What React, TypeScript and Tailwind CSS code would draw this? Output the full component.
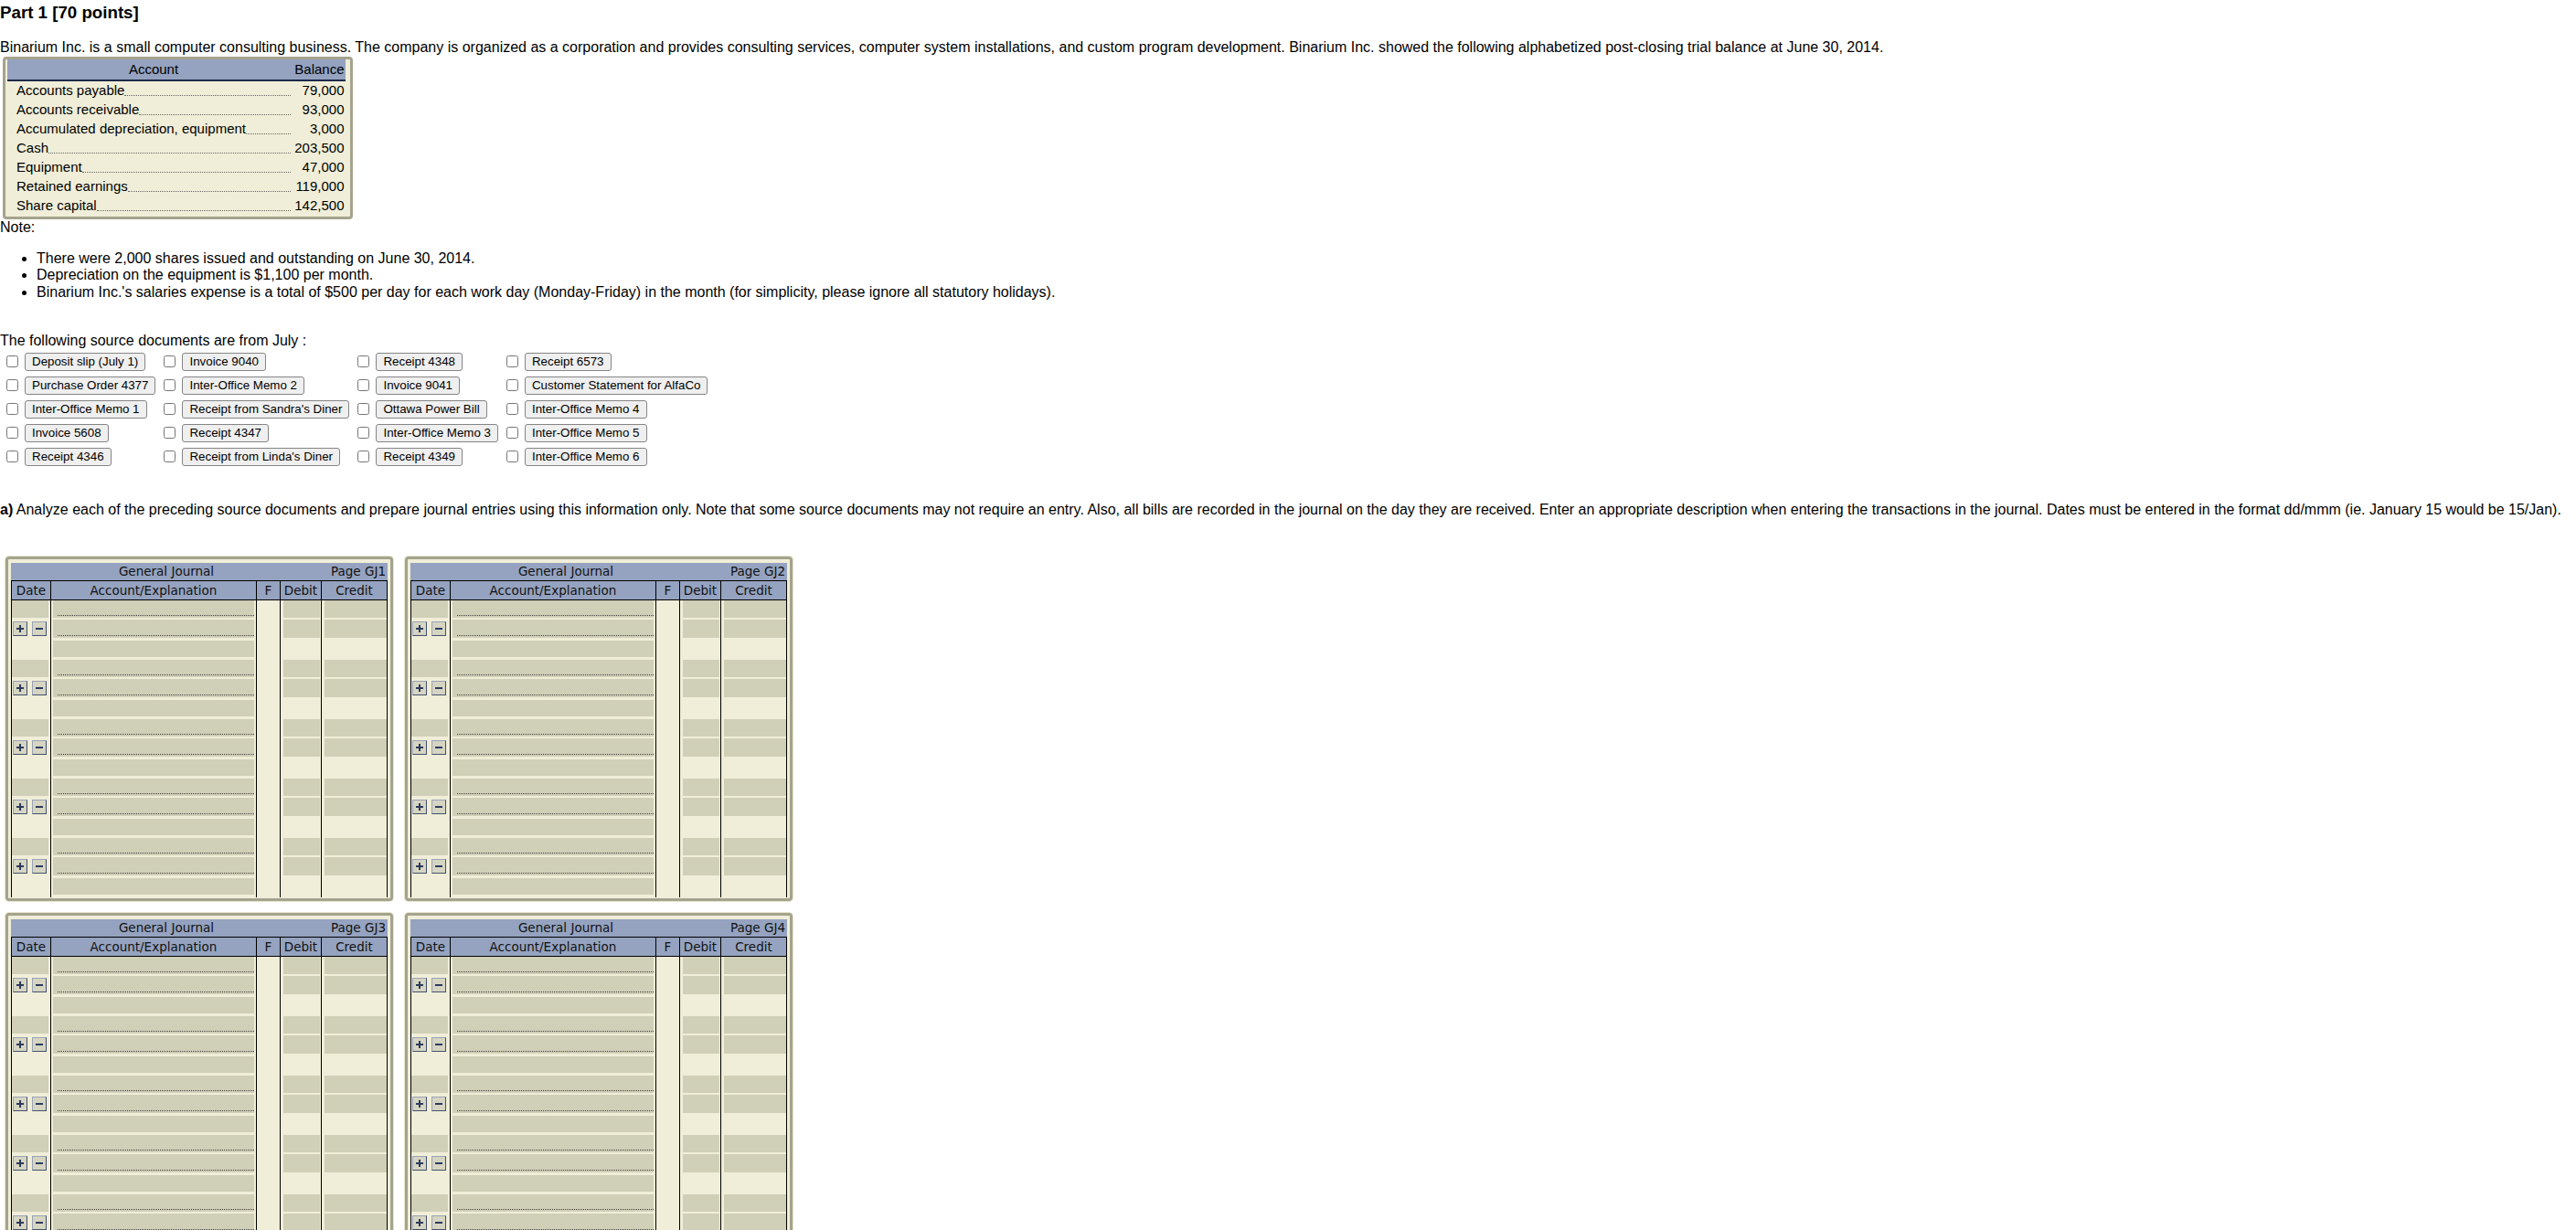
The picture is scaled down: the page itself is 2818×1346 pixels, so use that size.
import React from "react";

const trial: [string, string][] = [
  ["Accounts payable", "79,000"],
  ["Accounts receivable", "93,000"],
  ["Accumulated depreciation, equipment", "3,000"],
  ["Cash", "203,500"],
  ["Equipment", "47,000"],
  ["Retained earnings", "119,000"],
  ["Share capital", "142,500"],
];

const docs: string[][] = [
  ["Deposit slip (July 1)", "Invoice 9040", "Receipt 4348", "Receipt 6573"],
  ["Purchase Order 4377", "Inter-Office Memo 2", "Invoice 9041", "Customer Statement for AlfaCo"],
  ["Inter-Office Memo 1", "Receipt from Sandra's Diner", "Ottawa Power Bill", "Inter-Office Memo 4"],
  ["Invoice 5608", "Receipt 4347", "Inter-Office Memo 3", "Inter-Office Memo 5"],
  ["Receipt 4346", "Receipt from Linda's Diner", "Receipt 4349", "Inter-Office Memo 6"],
];

function PlusMinus({ minus }: { minus?: boolean }) {
  return (
    <div className="w-[16px] h-[16px] bg-[#d6d5c2] border border-t-[#9aa2b6] border-l-[#9aa2b6] border-r-[#44506e] border-b-[#44506e] flex items-center justify-center">
      <svg width="10" height="10" viewBox="0 0 10 10">
        {minus ? (
          <path d="M1 5h8" stroke="#2c3a5c" strokeWidth="2" />
        ) : (
          <path d="M5 1v8M1 5h8" stroke="#2c3a5c" strokeWidth="2" />
        )}
      </svg>
    </div>
  );
}

function AcctInput({ dotted, h }: { dotted: boolean; h: string }) {
  return (
    <div className={`w-[220px] ${h} bg-[#d0cfb7] flex items-end pl-[5px] pb-[2px]`}>
      {dotted ? <div className="w-full h-0 border-b border-dotted border-[#444]" /> : null}
    </div>
  );
}

function Group() {
  return (
    <div className="grid grid-cols-[43px_225px_26px_45px_72px] h-[65px]">
      <div className="border-r border-black flex flex-col">
        <div className="w-[40px] h-[19px] bg-[#d0cfb7]" />
        <div className="mt-[2px] h-[20px] flex items-start pt-[2px] pl-[1px] gap-[5px]">
          <PlusMinus />
          <PlusMinus minus />
        </div>
      </div>
      <div className="border-r border-black flex flex-col pl-[2px]">
        <AcctInput dotted h="h-[19px]" />
        <div className="mt-[2px]">
          <AcctInput dotted h="h-[20px]" />
        </div>
        <div className="mt-[3px]">
          <AcctInput dotted={false} h="h-[18px]" />
        </div>
      </div>
      <div className="border-r border-black" />
      <div className="border-r border-black flex flex-col pl-[3px]">
        <div className="w-[40px] h-[19px] bg-[#d0cfb7]" />
        <div className="mt-[2px] w-[40px] h-[20px] bg-[#d0cfb7]" />
      </div>
      <div className="border-r border-black flex flex-col pl-[3px]">
        <div className="h-[19px] bg-[#d0cfb7]" />
        <div className="mt-[2px] h-[20px] bg-[#d0cfb7]" />
      </div>
    </div>
  );
}

function Journal({ page }: { page: string }) {
  return (
    <div className="w-[426px] rounded-[5px] bg-[#e8e6cd] p-[1px]">
      <div className="border-[3px] border-[#a4a38d] rounded-[4px] bg-[#f0eed8] px-[3px] pt-[4px] pb-[1px] font-['DejaVu_Sans',Verdana,sans-serif] text-[13.5px] text-[#111]">
        <div className="w-[412px]">
          <div className="flex h-[19px] bg-[#95a3c0] leading-[19px]">
            <div className="w-[340px] text-center">General Journal</div>
            <div className="flex-1 text-right pr-[2px] whitespace-nowrap">Page {page}</div>
          </div>
          <div className="grid grid-cols-[43px_225px_26px_45px_72px] h-[22px] bg-[#95a3c0] border-t border-b border-l border-black leading-[20px] text-center">
            <div className="border-r border-black">Date</div>
            <div className="border-r border-black">Account/Explanation</div>
            <div className="border-r border-black">F</div>
            <div className="border-r border-black">Debit</div>
            <div className="border-r border-black">Credit</div>
          </div>
          <div className="border-l border-black">
            <Group />
            <Group />
            <Group />
            <Group />
            <Group />
          </div>
        </div>
      </div>
    </div>
  );
}

export default function App() {
  return (
    <div className="min-h-screen w-full bg-white text-black font-['Liberation_Sans',Arial,sans-serif] text-[16px]">
      <h3 className="pt-[3px] text-[18.72px] font-bold leading-[21.5px]">Part 1 [70 points]</h3>
      <p className="mt-[18px] leading-[18px]">
        Binarium Inc. is a small computer consulting business. The company is organized as a corporation and provides
        consulting services, computer system installations, and custom program development. Binarium Inc. showed the
        following alphabetized post-closing trial balance at June 30, 2014.
      </p>

      <div className="ml-[3px] mt-[1px] w-[383px] border-[3px] border-[#a4a38d] rounded-[4px] bg-[#f0eed8] pl-[2px] pr-[5px] pb-[1px] text-[15px]">
        <div className="flex h-[22px] bg-[#95a3c0] border-b-2 border-[#1e2a48] leading-[22px] box-content">
          <div className="w-[310px] pl-[10px] text-center">Account</div>
          <div className="flex-1 text-right pr-[1.5px]">Balance</div>
        </div>
        {trial.map(([name, bal]) => (
          <div key={name} className="flex h-[21px] leading-[19px]">
            <div className="w-[310px] pl-[10px] flex items-start">
              <span className="whitespace-nowrap">{name}</span>
              <div className="flex-1 mt-[15px] border-b border-dotted border-[#666]" />
            </div>
            <div className="flex-1 text-right pr-[1.5px]">{bal}</div>
          </div>
        ))}
      </div>

      <div className="leading-[18px]">Note:</div>
      <ul className="list-disc pl-[40px] mt-[16px] leading-[18.5px]">
        <li>There were 2,000 shares issued and outstanding on June 30, 2014.</li>
        <li>Depreciation on the equipment is $1,100 per month.</li>
        <li>
          Binarium Inc.'s salaries expense is a total of $500 per day for each work day (Monday-Friday) in the month
          (for simplicity, please ignore all statutory holidays).
        </li>
      </ul>

      <div className="mt-[34.5px] leading-[18px]">The following source documents are from July :</div>
      <div className="grid grid-cols-[repeat(4,max-content)] gap-x-[5px] gap-y-[2px] pl-[3px] pt-[2px] pb-[2px]">
        {docs.flat().map((d) => (
          <div key={d} className="h-[24px] flex items-center">
            <input type="checkbox" className="ml-[4px] mr-[3px] w-[13px] h-[13px] m-0" />
            <button className="ml-[4px] h-[20px] px-[7px] text-[13.33px] leading-[16px] bg-[#efefef] border border-[#858585] rounded-[3px] text-black whitespace-nowrap">
              {d}
            </button>
          </div>
        ))}
      </div>

      <div className="mt-[35px] leading-[18px]">
        <b>a)</b> Analyze each of the preceding source documents and prepare journal entries using this information only.
        Note that some source documents may not require an entry. Also, all bills are recorded in the journal on the day
        they are received. Enter an appropriate description when entering the transactions in the journal. Dates must be
        entered in the format dd/mmm (ie. January 15 would be 15/Jan).
      </div>

      <div className="mt-[41px] pl-[5px] grid grid-cols-[426px_426px] gap-[11px]">
        <Journal page="GJ1" />
        <Journal page="GJ2" />
        <Journal page="GJ3" />
        <Journal page="GJ4" />
      </div>
    </div>
  );
}
